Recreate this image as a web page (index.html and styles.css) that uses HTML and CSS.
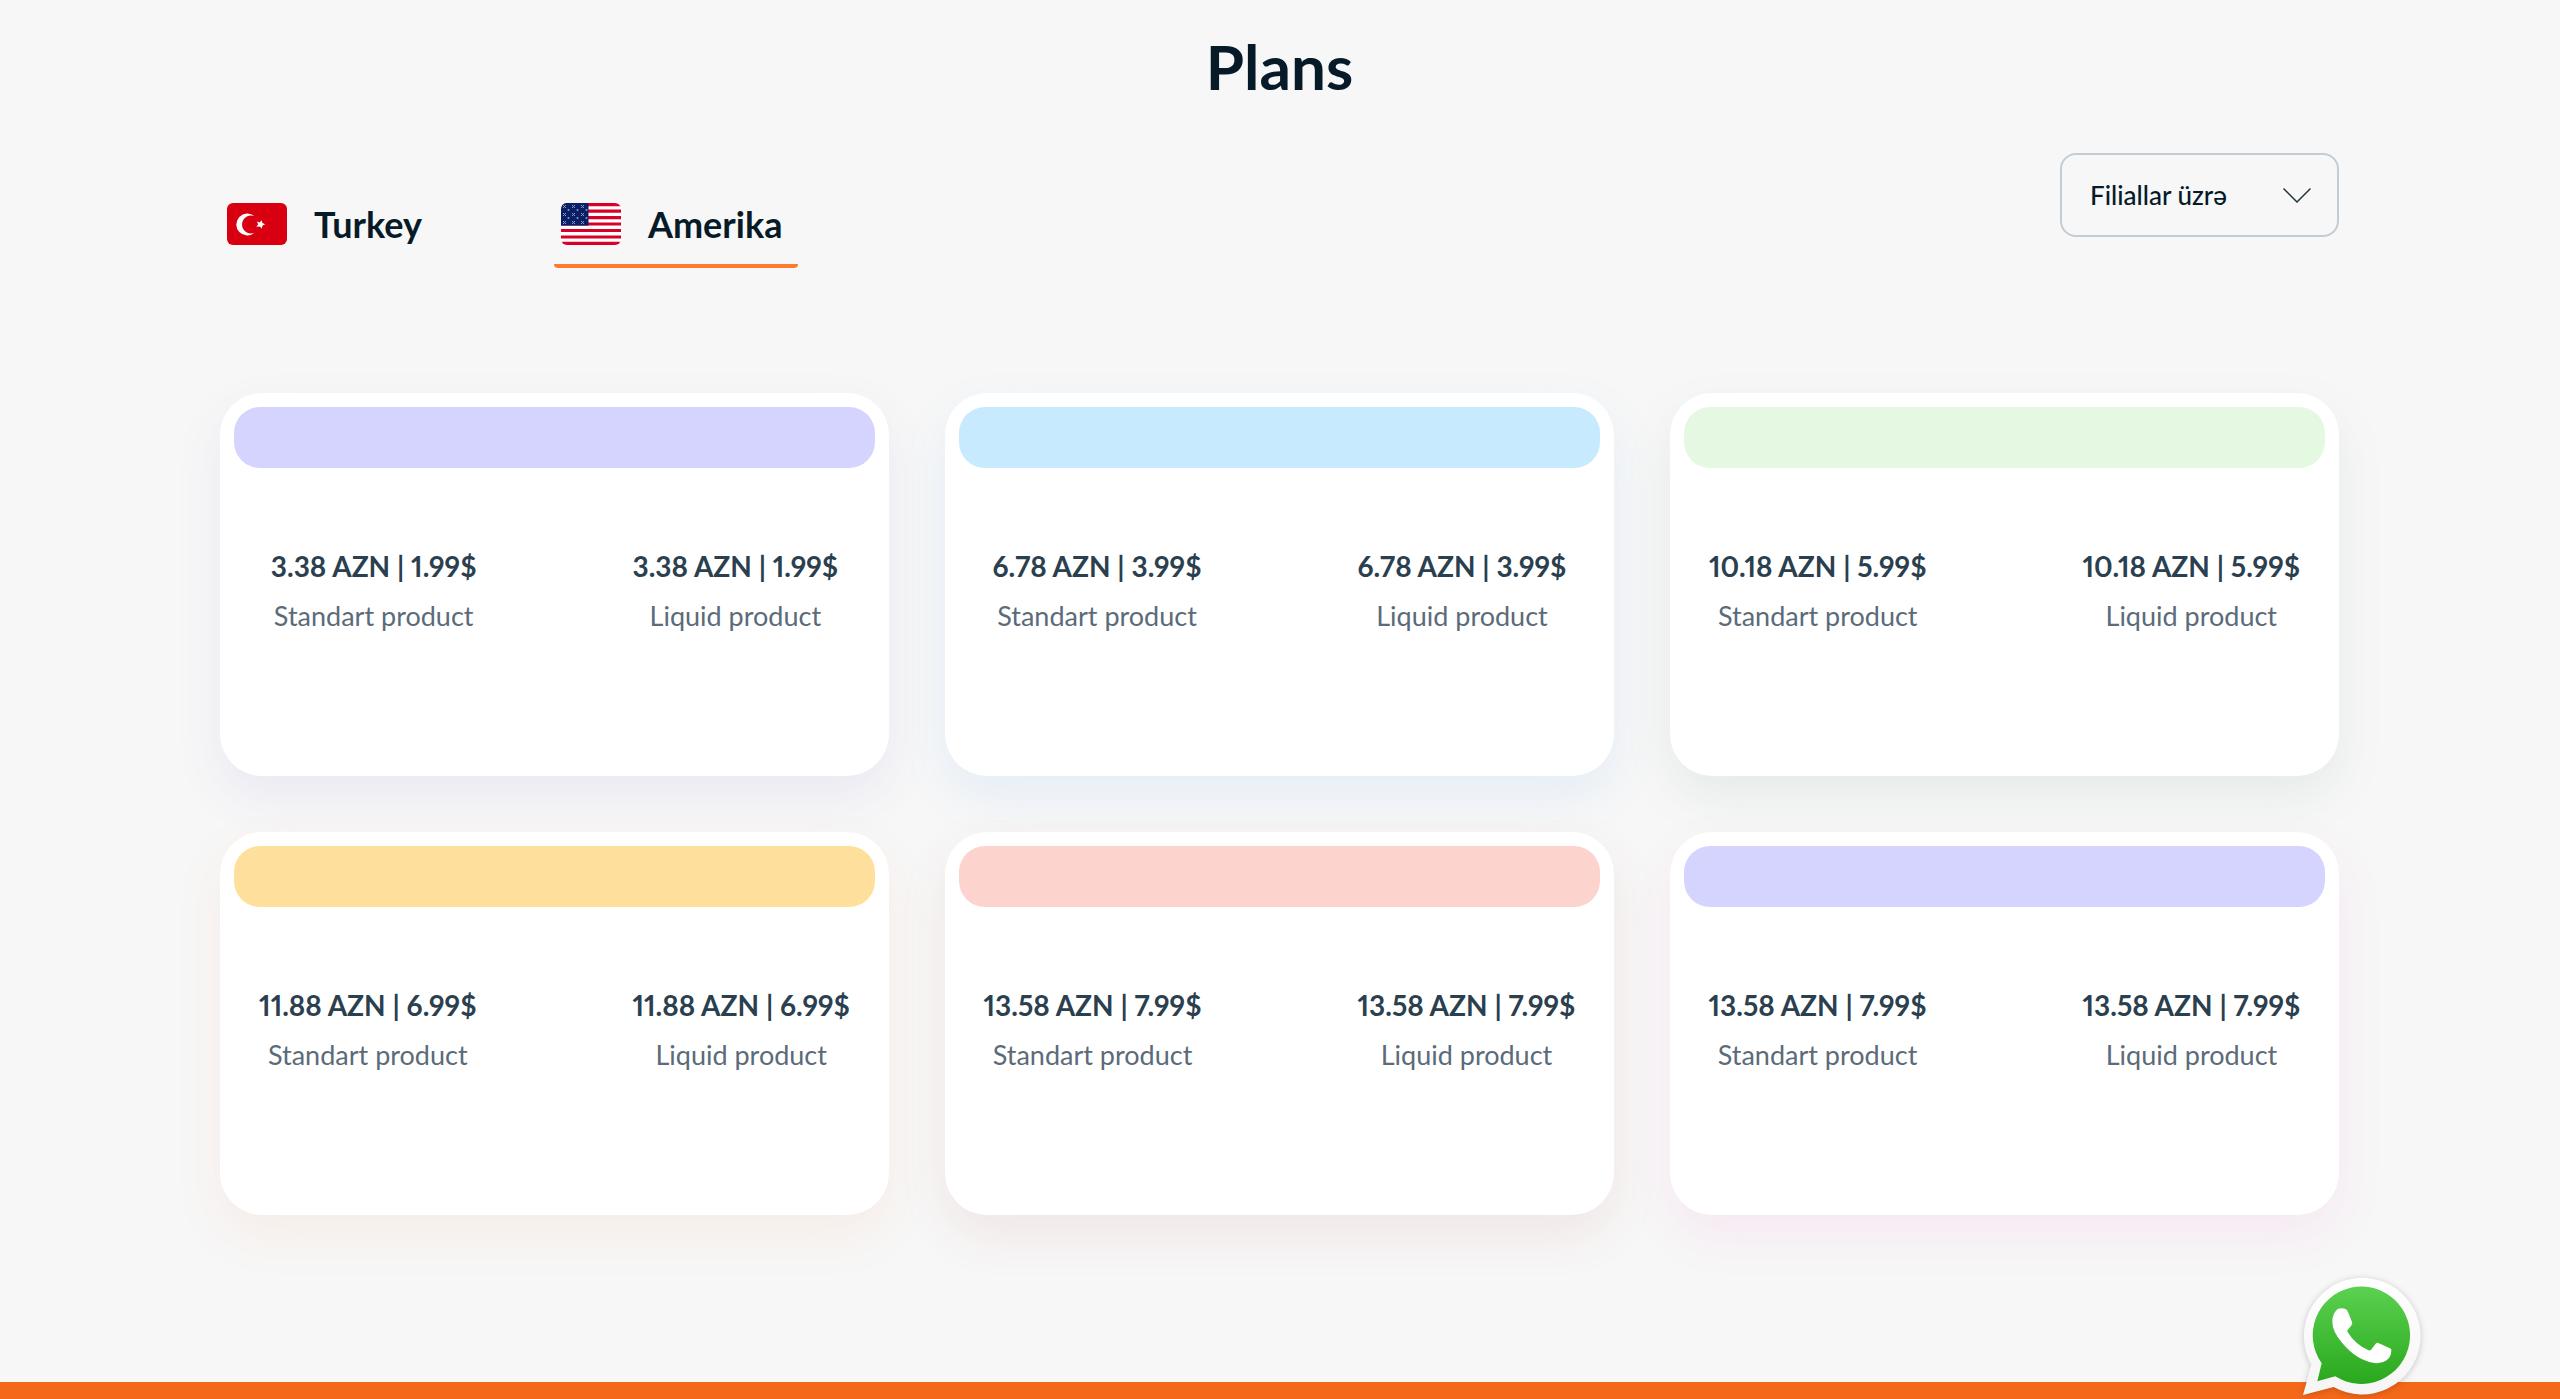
FILE: index.html
```html
<!DOCTYPE html>
<html lang="az">
<head>
<meta charset="UTF-8" />
<meta name="viewport" content="width=device-width, initial-scale=1" />
<title>Plans</title>
<link rel="stylesheet" href="styles.css">
</head>
<body>
<main class="plans">
  <h1>Plans</h1>

  <div class="toolbar">
    <nav class="countries">
      <a href="#turkey" class="country">
        <svg class="flag" viewBox="0 0 60 42" aria-hidden="true">
          <rect width="60" height="42" rx="6" fill="#d80010"/>
          <path d="M27.500 13.200A11 11 0 1 0 27.500 29.800A9 9 0 1 1 27.500 13.200Z" fill="#fff"/>
          <path d="M34.6 17.2L35.4 20.1L38.2 21.3L35.5 22.6L34.8 25.6L32.7 23.4L29.4 23.8L31.2 21.3L29.8 18.6L32.6 19.5Z" fill="#fff"/>
        </svg>
        <span>Turkey</span>
      </a>
      <a href="#amerika" class="country active">
        <svg class="flag" viewBox="0 0 60 42" aria-hidden="true">
          <defs>
            <clipPath id="flagClip"><rect width="60" height="42" rx="6"/></clipPath>
            <pattern id="stars" width="9" height="8" patternUnits="userSpaceOnUse">
              <path d="M2 2l3 3M5 2l-3 3" stroke="#8e99c4" stroke-width="1"/>
              <circle cx="7.5" cy="7" r="1" fill="#8e99c4"/>
            </pattern>
          </defs>
          <g clip-path="url(#flagClip)">
            <rect width="60" height="42" fill="#fff"/>
            <path d="M0 1.6h60M0 8.1h60M0 14.6h60M0 21h60M0 27.5h60M0 34h60M0 40.4h60" stroke="#d80027" stroke-width="3.2"/>
            <rect width="27.500" height="22.600" fill="#0a1f66"/>
            <rect width="27" height="22" fill="url(#stars)"/>
          </g>
        </svg>
        <span>Amerika</span>
      </a>
    </nav>

    <div class="branch">
      <select aria-label="Filiallar üzrə">
        <option>Filiallar üzrə</option>
      </select>
      <svg class="chevron" viewBox="0 0 28 15" aria-hidden="true">
        <path d="M0.500 0.500L14 14L27.500 0.500" fill="none" stroke="#22383f" stroke-width="1.500"/>
      </svg>
    </div>
  </div>

  <div class="cards">
    <article class="card violet">
      <div class="bar"></div>
      <div class="prices">
        <div class="price"><strong>3.38 AZN | 1.99$</strong><p>Standart product</p></div>
        <div class="price"><strong>3.38 AZN | 1.99$</strong><p>Liquid product</p></div>
      </div>
    </article>
    <article class="card blue">
      <div class="bar"></div>
      <div class="prices">
        <div class="price"><strong>6.78 AZN | 3.99$</strong><p>Standart product</p></div>
        <div class="price"><strong>6.78 AZN | 3.99$</strong><p>Liquid product</p></div>
      </div>
    </article>
    <article class="card green">
      <div class="bar"></div>
      <div class="prices">
        <div class="price"><strong>10.18 AZN | 5.99$</strong><p>Standart product</p></div>
        <div class="price"><strong>10.18 AZN | 5.99$</strong><p>Liquid product</p></div>
      </div>
    </article>
    <article class="card orange">
      <div class="bar"></div>
      <div class="prices">
        <div class="price"><strong>11.88 AZN | 6.99$</strong><p>Standart product</p></div>
        <div class="price"><strong>11.88 AZN | 6.99$</strong><p>Liquid product</p></div>
      </div>
    </article>
    <article class="card red">
      <div class="bar"></div>
      <div class="prices">
        <div class="price"><strong>13.58 AZN | 7.99$</strong><p>Standart product</p></div>
        <div class="price"><strong>13.58 AZN | 7.99$</strong><p>Liquid product</p></div>
      </div>
    </article>
    <article class="card pink">
      <div class="bar"></div>
      <div class="prices">
        <div class="price"><strong>13.58 AZN | 7.99$</strong><p>Standart product</p></div>
        <div class="price"><strong>13.58 AZN | 7.99$</strong><p>Liquid product</p></div>
      </div>
    </article>
  </div>
</main>

<footer class="footer"></footer>

<a href="#whatsapp" class="whatsapp" aria-label="WhatsApp">
  <svg viewBox="97 79 360 360">
    <defs>
      <linearGradient id="waOuter" x1="0" y1="0" x2="0" y2="1">
        <stop offset="0" stop-color="#fff"/>
        <stop offset="1" stop-color="#f5f5f5"/>
      </linearGradient>
      <linearGradient id="waGreen" x1="0" y1="0" x2="0" y2="1">
        <stop offset="0" stop-color="#5bd150"/>
        <stop offset="1" stop-color="#2aa81d"/>
      </linearGradient>
    </defs>
    <path d="M100 436L125 345A175 175 0 1 1 192 412Z" fill="url(#waOuter)"/>
    <path d="M143 395L156 341A146 146 0 1 1 197 380Z" fill="url(#waGreen)"/>
    <path d="M205 177Q217 174 228 178Q233 181 236 189L247 217Q249 221 246 226L234 241Q232 244 234 247Q256 284 297 302Q301 303 304 300L318 282Q321 278 326 280L361 296Q366 298 365 303Q364 322 352 331Q336 343 315 340Q261 332 217 279Q188 245 188 216Q188 190 205 177Z" fill="#fff"/>
  </svg>
</a>
</body>
</html>
```

FILE: styles.css
```css
* {
  margin: 0;
  padding: 0;
  box-sizing: border-box;
}
body {
  min-height: 100vh;
  display: flex;
  flex-direction: column;
  font-family: Lato, 'Open Sans', sans-serif;
  background: #f7f7f7;
  color: #071a28;
}
.plans {
  padding: 30px 221px 167px 220px;
}
h1 {
  font-size: 62px;
  line-height: 72px;
  font-weight: 700;
  text-align: center;
}

/* Country tabs and branch select */
.toolbar {
  display: flex;
  justify-content: space-between;
  align-items: flex-start;
  margin-top: 51px;
}
.countries {
  display: flex;
  gap: 116px;
  padding-top: 32px;
}
.country {
  display: flex;
  align-items: center;
  gap: 27px;
  height: 83px;
  padding: 0 16px 2px 7px;
  border-bottom: 4px solid transparent;
  border-radius: 4px;
  font-size: 36px;
  font-weight: 700;
  color: inherit;
  text-decoration: none;
}
.country.active {
  border-bottom-color: #ff7c2e;
}
.flag {
  width: 60px;
  height: 42px;
}
.branch {
  position: relative;
}
.branch select {
  appearance: none;
  width: 279px;
  height: 84px;
  padding: 0 68px 0 28px;
  border: 2px solid #c3ccd5;
  border-radius: 16px;
  background: transparent;
  font: 500 26px Lato, 'Open Sans', sans-serif;
  color: inherit;
}
.chevron {
  position: absolute;
  top: 35px;
  right: 28px;
  width: 28px;
  height: 15px;
  pointer-events: none;
}

/* Cards */
.cards {
  display: grid;
  grid-template-columns: repeat(3, 1fr);
  gap: 56px;
  margin-top: 125px;
}
.card {
  min-height: 383px;
  padding: 14px;
  border-radius: 42px;
  background: #fff;
  box-shadow: 0 20px 50px var(--shadow);
}
.bar {
  height: 61px;
  border-radius: 26px;
  background: var(--bar);
}
.prices {
  display: flex;
  justify-content: center;
  gap: 156px;
  margin-top: 80px;
  text-align: center;
}
.price strong {
  display: block;
  font-size: 28px;
  line-height: 36px;
  font-weight: 700;
  font-variant-numeric: proportional-nums;
  color: #2b404f;
  white-space: nowrap;
}
.price p {
  margin-top: 16px;
  font-size: 27px;
  line-height: 32px;
  color: #5b6b79;
}
.violet { --bar: #d5d4ff; --shadow: rgba(88, 63, 191, 0.08); }
.blue { --bar: #c7eaff; --shadow: rgba(40, 140, 240, 0.09); }
.green { --bar: #e5f8e2; --shadow: rgba(50, 120, 80, 0.09); }
.orange { --bar: #ffdf9c; --shadow: rgba(240, 110, 50, 0.08); }
.red { --bar: #fcd3cd; --shadow: rgba(190, 60, 50, 0.09); }
.pink { --bar: #d5d4ff; --shadow: rgba(240, 60, 190, 0.08); }

.footer {
  flex: 1;
  min-height: 16px;
  background: #f4681a;
}
.whatsapp {
  position: fixed;
  right: 138px;
  bottom: 3px;
  width: 120px;
  height: 120px;
  filter: drop-shadow(0 1px 3px rgba(0, 0, 0, 0.2));
}
.whatsapp svg {
  display: block;
  overflow: visible;
}
```
